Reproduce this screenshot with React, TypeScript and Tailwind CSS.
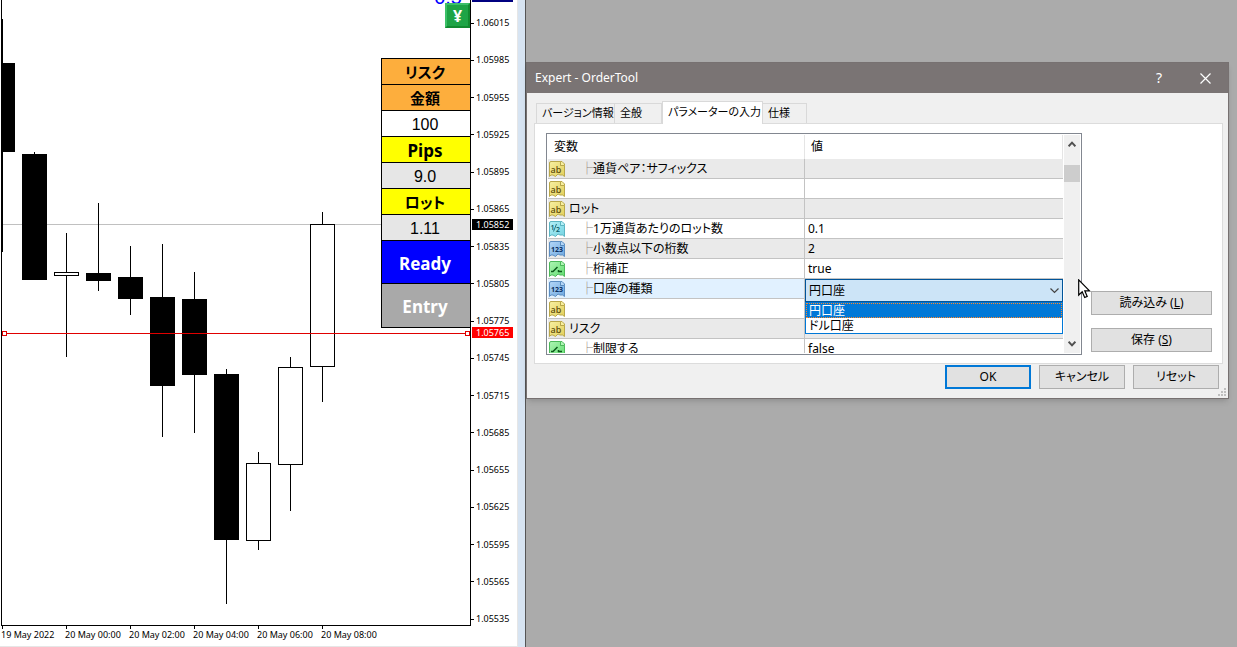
import { useState } from "react";
import { clsx } from "clsx";

type ParamKind = "text" | "double" | "int" | "bool";

interface Candle {
  x: number;
  high: number;
  top: number;
  bottom: number;
  low: number;
  up?: boolean;
}

interface Param {
  kind: ParamKind;
  label: string;
  value: string;
  child?: boolean;
  select?: boolean;
}

const CANDLES: Candle[] = [
  { x: 2, high: 19, top: 63, bottom: 152, low: 252 },
  { x: 34, high: 152, top: 154, bottom: 280, low: 280 },
  { x: 66, high: 233, top: 272, bottom: 276, low: 357, up: true },
  { x: 98, high: 203, top: 273, bottom: 281, low: 291 },
  { x: 130, high: 246, top: 277, bottom: 299, low: 315 },
  { x: 162, high: 244, top: 297, bottom: 386, low: 437 },
  { x: 194, high: 272, top: 299, bottom: 375, low: 433 },
  { x: 226, high: 369, top: 374, bottom: 540, low: 604 },
  { x: 258, high: 452, top: 463, bottom: 541, low: 550, up: true },
  { x: 290, high: 357, top: 367, bottom: 465, low: 511, up: true },
  { x: 322, high: 212, top: 224, bottom: 367, low: 402, up: true },
];

const PRICES = [
  "1.06015", "1.05985", "1.05955", "1.05925", "1.05895", "1.05865",
  "1.05835", "1.05805", "1.05775", "1.05745", "1.05715", "1.05685",
  "1.05655", "1.05625", "1.05595", "1.05565", "1.05535",
];

const TIMES = [
  "19 May 2022",
  "20 May 00:00",
  "20 May 02:00",
  "20 May 04:00",
  "20 May 06:00",
  "20 May 08:00",
];

const PARAMS: Param[] = [
  { kind: "text", label: "通貨ペア：サフィックス", value: "", child: true },
  { kind: "text", label: "", value: "" },
  { kind: "text", label: "ロット", value: "" },
  { kind: "double", label: "1万通貨あたりのロット数", value: "0.1", child: true },
  { kind: "int", label: "小数点以下の桁数", value: "2", child: true },
  { kind: "bool", label: "桁補正", value: "true", child: true },
  { kind: "int", label: "口座の種類", value: "", child: true, select: true },
  { kind: "text", label: "", value: "" },
  { kind: "text", label: "リスク", value: "" },
  { kind: "bool", label: "制限する", value: "false", child: true },
];

const TABS = [
  { name: "バージョン情報", width: "w-[79px]" },
  { name: "全般", width: "w-[47px]" },
  { name: "パラメーターの入力", width: "w-[101px]" },
  { name: "仕様", width: "w-[44px]" },
];

const ACCOUNTS = ["円口座", "ドル口座"];

const ICON_COLORS: Record<ParamKind, { light: string; fill: string; edge: string; ink: string }> = {
  text: { light: "#f7efa0", fill: "#e2cf5c", edge: "#b9a74a", ink: "#5c4a08" },
  double: { light: "#b4f0f7", fill: "#74d3e2", edge: "#5cb4c2", ink: "#0d5a68" },
  int: { light: "#b3d6f7", fill: "#6ea8e0", edge: "#5a8cc0", ink: "#0c2f5e" },
  bool: { light: "#aef5b4", fill: "#62dd70", edge: "#4cb85a", ink: "#0b5a1a" },
};

function ParamIcon({ kind }: { kind: ParamKind }) {
  const c = ICON_COLORS[kind];
  return (
    <svg width="16" height="16" viewBox="0 0 16 16" className="block shrink-0" aria-hidden="true">
      <defs>
        <linearGradient id={`grad-${kind}`} x1="0" y1="0" x2="1" y2="1">
          <stop offset="0" stopColor={c.light} />
          <stop offset="1" stopColor={c.fill} />
        </linearGradient>
      </defs>
      <path
        d="M2 .5H11.5V4.5H15.5V15.500L13.500 14L11 14L9 13L6.500 15.500L4 14L2 14L.5 15.500V2Q.5 .5 2 .5Z"
        fill={`url(#grad-${kind})`}
        stroke={c.edge}
      />
      <path d="M11.500 .5H13L15.500 3V4.500H11.500Z" fill={c.light} stroke={c.edge} />
      {kind === "text" && (
        <text x="1.500" y="11.500" fontSize="9" fontWeight="500" fontFamily="Noto Sans, sans-serif" fill={c.ink}>ab</text>
      )}
      {kind === "double" && (
        <>
          <text x="1.500" y="9" fontSize="7" fontWeight="600" fontFamily="Noto Sans, sans-serif" fill={c.ink}>1</text>
          <path d="M4.500 10.500L7.500 3" stroke={c.ink} strokeWidth=".8" />
          <text x="7" y="11" fontSize="7" fontWeight="600" fontFamily="Noto Sans, sans-serif" fill={c.ink}>2</text>
        </>
      )}
      {kind === "int" && (
        <text x="2" y="11" fontSize="7" fontWeight="700" fontFamily="Noto Sans, sans-serif" fill={c.ink}>123</text>
      )}
      {kind === "bool" && (
        <path d="M2 10.500H4L8.500 6M9 10.500H13M9.500 9V11" fill="none" stroke={c.ink} strokeWidth="1.500" />
      )}
    </svg>
  );
}

function Chart() {
  return (
    <svg viewBox="2 0 468 625" preserveAspectRatio="none" shapeRendering="crispEdges" className="block h-full w-full">
      <rect x="2" y="224" width="468" height="1" fill="#c0c0c0" />
      {CANDLES.map((c) => (
        <g key={c.x}>
          <rect x={c.x} y={c.high} width="1" height={c.low - c.high} fill="#000" />
          <rect x={c.x - 12} y={c.top} width="25" height={c.bottom - c.top} fill="#000" />
          {c.up && (
            <rect x={c.x - 11} y={c.top + 1} width="23" height={c.bottom - c.top - 2} fill="#fff" />
          )}
        </g>
      ))}
      {/* stop line with its two drag handles */}
      <rect x="2" y="333" width="468" height="1" fill="#e00000" />
      <rect x="2.500" y="331.500" width="4" height="4" fill="#fff" stroke="#e00000" />
      <rect x="465.500" y="331.500" width="4" height="4" fill="#fff" stroke="#e00000" />
    </svg>
  );
}

function OrderPanel() {
  const cell = "flex h-[26px] items-center justify-center border-b border-black pt-0.5 pr-0.5";
  const number = "font-['Liberation_Sans'] text-base leading-none";
  const action = "block w-full border-b border-black pt-0.5 pr-0.5 text-[17px] font-bold text-white";
  return (
    <div className="absolute top-[58px] right-0 w-[89px] border-t border-l border-black leading-none text-black">
      <div className={clsx(cell, "bg-[#fdae3d] text-[15px] font-bold")}>リスク</div>
      <div className={clsx(cell, "bg-[#fdae3d] text-[15px] font-bold")}>金額</div>
      <div className={clsx(cell, number, "bg-white")}>100</div>
      <div className={clsx(cell, "bg-[#ffff00] text-[17px] font-bold")}>Pips</div>
      <div className={clsx(cell, number, "bg-[#e6e6e6]")}>9.0</div>
      <div className={clsx(cell, "bg-[#ffff00] text-[15px] font-bold")}>ロット</div>
      <div className={clsx(cell, number, "bg-[#e6e6e6]")}>1.11</div>
      <button type="button" className={clsx(action, "h-[43px] bg-[#0000ff]")}>Ready</button>
      <button type="button" className={clsx(action, "h-[44px] bg-[#a9a9a9]")}>Entry</button>
    </div>
  );
}

function ChartWindow() {
  return (
    <section className="flex shrink-0 border-r border-[#555555] bg-[#d7e4f2]">
      <div className="mr-[7px] flex w-[518px] flex-col border-r border-b border-[#e6e6e6] bg-white pl-px">
        <div className="flex min-h-0 flex-1">
          <div className="relative min-w-0 flex-1 overflow-hidden border-x border-b border-black">
            <Chart />
            <span className="absolute -top-[17px] right-2 font-['Liberation_Sans'] text-xl leading-7 text-[#0000ff]">0.5</span>
            <button
              type="button"
              className="absolute top-[3px] right-0 h-[25px] w-[25px] border-2 border-t-[#3cc068] border-r-[#128a30] border-b-[#128a30] border-l-[#3cc068] bg-[#1ea446] text-base leading-none font-bold text-white"
            >
              ¥
            </button>
            <OrderPanel />
          </div>
          <div className="relative flex w-[46px] flex-col justify-between pt-4 text-[9px] leading-[14px]">
            {PRICES.map((p) => (
              <div key={p} className="flex items-center gap-0.5">
                <span className="h-px w-[3px] bg-black" />
                {p}
              </div>
            ))}
            <span className="absolute top-0 left-px h-[2px] w-[41px] bg-[#000080]" />
            <span className="absolute top-[219px] left-px w-[41px] bg-black pl-1 leading-[11px] text-white">1.05852</span>
            <span className="absolute top-[327px] left-px w-[41px] bg-[#ff0000] pl-1 leading-[11px] text-white">1.05765</span>
          </div>
        </div>
        <div className="flex h-5 text-[9px] leading-[11px]">
          {TIMES.map((t) => (
            <div key={t} className="w-16 whitespace-nowrap">
              <span className="ml-px block h-[3px] w-px bg-black" />
              {t}
            </div>
          ))}
        </div>
      </div>
    </section>
  );
}

function AccountSelect() {
  const [account, setAccount] = useState(ACCOUNTS[0]);
  return (
    <div className="absolute top-0 left-0 z-10 w-full">
      <select
        aria-label="口座の種類"
        value={account}
        onChange={(e) => setAccount(e.target.value)}
        className="block h-[23px] w-full appearance-none border border-[#005499] bg-[#cce4f7] pl-[3px] outline-none"
      >
        {ACCOUNTS.map((a) => (
          <option key={a}>{a}</option>
        ))}
      </select>
      <svg width="9" height="6" viewBox="0 0 9 6" className="pointer-events-none absolute top-[9px] right-1" aria-hidden="true">
        <path d="M.5 .5L4.500 4.500L8.500 .5" fill="none" stroke="#444" strokeWidth="1.200" />
      </svg>
      <ul role="listbox" className="border border-[#0078d7] bg-white leading-[15px]">
        {ACCOUNTS.map((a) => (
          <li
            key={a}
            role="option"
            aria-selected={a === account}
            onClick={() => setAccount(a)}
            className={clsx(
              "h-[15px] pl-[3px]",
              a === account && "bg-[#0078d7] text-white outline-1 -outline-offset-1 outline-dotted outline-[#ff8728]"
            )}
          >
            {a}
          </li>
        ))}
      </ul>
    </div>
  );
}

function ParamTable() {
  return (
    <table className="w-full table-fixed border-separate border-spacing-0 text-left">
      <thead>
        <tr className="h-6">
          <th className="w-[257px] border-r border-[#e5e5e5] p-0 pl-1.5 font-normal">変数</th>
          <th className="border-r border-[#e5e5e5] p-0 pl-1.5 font-normal">値</th>
        </tr>
      </thead>
      <tbody>
        {PARAMS.map((p, i) => (
          <tr key={i} className={clsx("h-5", p.select ? "bg-[#e1f1ff]" : i % 2 === 0 ? "bg-[#eaeaea]" : "bg-white")}>
            <td className="h-5 border-r border-b border-[#c3c3c3] p-0">
              <div className="flex h-[19px] items-center gap-1 overflow-hidden pl-px whitespace-nowrap">
                <ParamIcon kind={p.kind} />
                <span className={clsx(p.child && "pl-3")}>
                  {p.child && <span className="text-[#8f8478]">├</span>}
                  {p.label}
                </span>
              </div>
            </td>
            <td className="relative h-5 border-b border-[#c3c3c3] p-0 pl-[3px]">
              {p.select ? <AccountSelect /> : p.value}
            </td>
          </tr>
        ))}
      </tbody>
    </table>
  );
}

function ScrollBar() {
  return (
    <div className="ml-px flex w-4 shrink-0 flex-col items-center justify-between bg-[#f0f0f0] py-1.5">
      <svg width="8" height="6" viewBox="0 0 8 6" aria-hidden="true">
        <path d="M.6 5.200L4 1.600L7.400 5.200" fill="none" stroke="#505050" strokeWidth="2" />
      </svg>
      <span className="mt-[18px] mb-auto h-[17px] w-full bg-[#cdcdcd]" />
      <svg width="8" height="6" viewBox="0 0 8 6" aria-hidden="true">
        <path d="M.6 .8L4 4.400L7.400 .8" fill="none" stroke="#505050" strokeWidth="2" />
      </svg>
    </div>
  );
}

function DialogButton({ children, wide, primary }: { children: React.ReactNode; wide?: boolean; primary?: boolean }) {
  return (
    <button
      type="button"
      className={clsx(
        "flex h-6 items-center justify-center bg-[#e1e1e1]",
        wide ? "w-[121px]" : "w-[86px]",
        primary ? "border-2 border-[#0078d7]" : "border border-[#adadad]"
      )}
    >
      <span>{children}</span>
    </button>
  );
}

function ExpertDialog() {
  const [tab, setTab] = useState(2);
  return (
    <div role="dialog" aria-label="Expert - OrderTool" className="relative border border-[#777171] bg-[#f0f0f0] shadow-md">
      <header className="flex h-[30px] items-center bg-[#7a7474] text-white">
        <h1 className="flex-1 pl-2">Expert - OrderTool</h1>
        <button type="button" aria-label="ヘルプ" className="w-[46px] text-center text-sm">?</button>
        <button type="button" aria-label="閉じる" className="flex w-[46px] justify-center">
          <svg width="11" height="11" viewBox="0 0 11 11">
            <path d="M.5 .5L10.500 10.500M10.500 .5L.5 10.500" stroke="#fff" strokeWidth="1.200" />
          </svg>
        </button>
      </header>

      <div className="pt-2 pr-[5px] pl-[7px]">
        <div role="tablist" className="relative flex items-end pl-[2px] text-[11px]">
          {TABS.map((t, i) => (
            <button
              key={t.name}
              type="button"
              role="tab"
              aria-selected={i === tab}
              onClick={() => setTab(i)}
              className={clsx(
                "border-t border-r border-[#d9d9d9] text-left whitespace-nowrap",
                t.width,
                i === 0 && "border-l",
                i === tab ? "-mb-px h-[23px] border-l bg-white pb-0.5 pl-[5px]" : "h-5 pl-[5px]"
              )}
            >
              {t.name}
            </button>
          ))}
        </div>
        <div className="flex gap-[9px] border border-[#dcdcdc] bg-white pt-[9px] pr-[10px] pb-2 pl-[11px]">
          <div className="flex h-[222px] min-w-0 flex-1 overflow-hidden border border-[#828790] p-px">
            <div className="min-w-0 flex-1 overflow-hidden">
              <ParamTable />
            </div>
            <ScrollBar />
          </div>
          <div className="flex flex-col justify-end gap-[13px] pb-[3px]">
            <DialogButton wide>読み込み (<u>L</u>)</DialogButton>
            <DialogButton wide>保存 (<u>S</u>)</DialogButton>
          </div>
        </div>
      </div>

      <footer className="flex justify-end gap-2 pt-px pr-[9px] pb-[9px]">
        <DialogButton primary>OK</DialogButton>
        <DialogButton>キャンセル</DialogButton>
        <DialogButton>リセット</DialogButton>
      </footer>

      <svg width="8" height="8" viewBox="0 0 8 8" className="absolute right-[2px] bottom-[2px]" fill="#bfbfbf" aria-hidden="true">
        <path d="M6 0h2v2h-2zM3 3h2v2h-2zM6 3h2v2h-2zM0 6h2v2h-2zM3 6h2v2h-2zM6 6h2v2h-2z" />
      </svg>

      {/* mouse pointer */}
      <svg width="13" height="20" viewBox="0 0 13 20" className="absolute top-[216px] right-[137px]" aria-hidden="true">
        <path d="M.7 .9V16L4.200 12.700L6.700 18.500L9.200 17.400L6.800 11.800H11.500Z" fill="#fff" stroke="#000" strokeWidth="1.200" />
      </svg>
    </div>
  );
}

export default function App() {
  return (
    <div className="flex h-screen overflow-hidden bg-[#ababab] font-['Noto_Sans','Noto_Sans_CJK_JP',sans-serif] text-xs text-black [font-feature-settings:'palt']">
      <ChartWindow />
      <main className="min-w-0 flex-1 pt-[62px] pr-2">
        <ExpertDialog />
      </main>
    </div>
  );
}
